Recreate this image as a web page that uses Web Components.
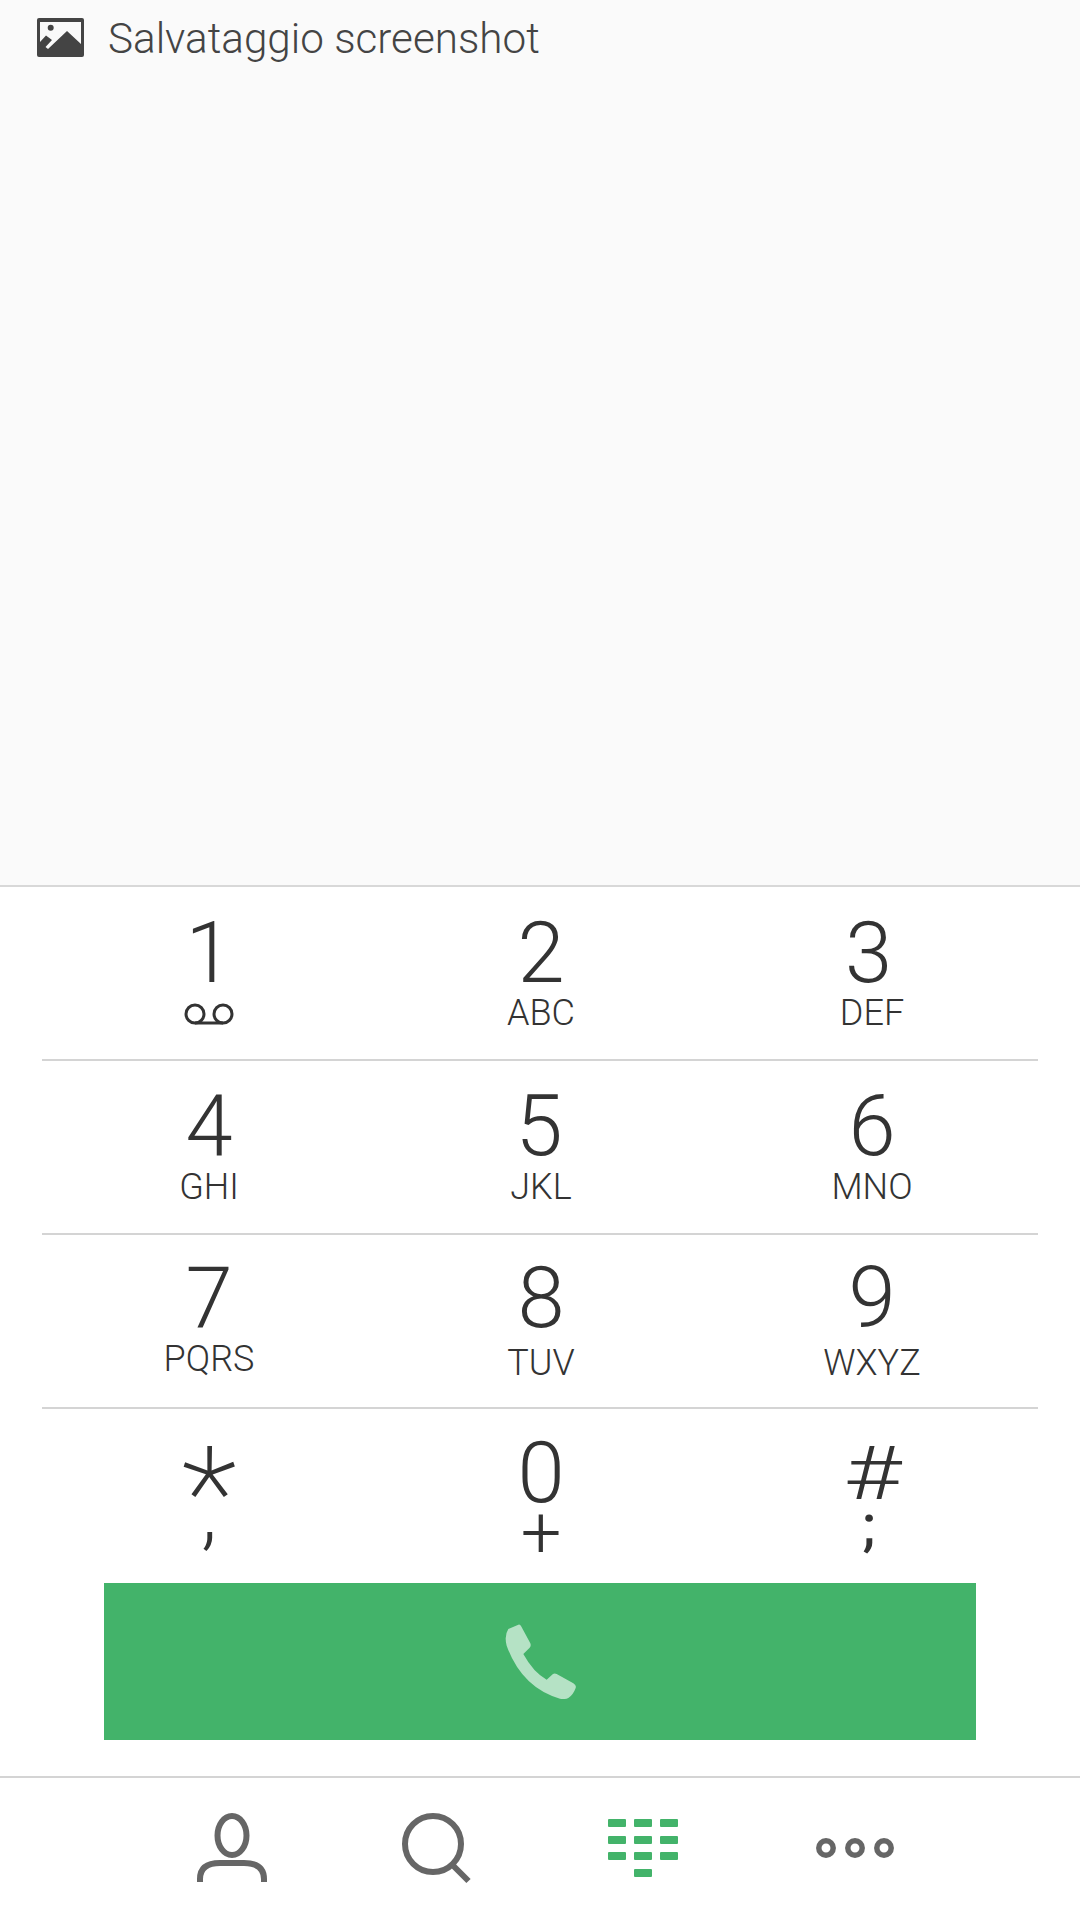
<!DOCTYPE html>
<html>
<head>
<meta charset="utf-8">
<style>
	html, body {margin:0; padding:0; background:#fff; font-family:Roboto, "Liberation Sans", sans-serif;}
	body {width:1080px; height:1920px; overflow:hidden; display:flex; flex-direction:column;}
</style>
</head>
<body>
	<notification-area>
		<svg slot="icon" width="47" height="39" viewBox="0 0 47 39">
			<rect width="47" height="39" rx="2" fill="#444"/>
			<polygon fill="#fafafa" points="3,4 44,4 44,26 30,13 11,31 8.5,29 15,22 9,17.5 3,24"/>
			<circle cx="13.7" cy="9.7" r="3" fill="#444"/>
		</svg>
		Salvataggio screenshot
	</notification-area>

	<dial-pad>
		<dial-row style="--digit-top:25px;">
			<dial-key style="--sub-gap:0px;">1
				<svg slot="sub" width="50" height="22" viewBox="0 0 50 22" style="margin-top:8px;">
					<g fill="none" stroke="#333" stroke-width="3">
						<circle cx="11" cy="11" r="9"/>
						<circle cx="39" cy="11" r="9"/>
						<line x1="11" y1="20" x2="39" y2="20"/>
					</g>
				</svg>
			</dial-key>
			<dial-key>2<span slot="sub">ABC</span></dial-key>
			<dial-key style="--digit-dx:-7px;">3<span slot="sub">DEF</span></dial-key>
		</dial-row>
		<dial-row style="--digit-top:24px;--sub-gap:2px;">
			<dial-key>4<span slot="sub">GHI</span></dial-key>
			<dial-key style="--digit-dx:-4px;">5<span slot="sub">JKL</span></dial-key>
			<dial-key>6<span slot="sub">MNO</span></dial-key>
		</dial-row>
		<dial-row style="--digit-top:22px;--sub-gap:6px;">
			<dial-key style="--sub-gap:2px;">7<span slot="sub">PQRS</span></dial-key>
			<dial-key>8<span slot="sub">TUV</span></dial-key>
			<dial-key>9<span slot="sub">WXYZ</span></dial-key>
		</dial-row>
		<dial-row style="--digit-top:23px;" last>
			<dial-key style="--digit-size:130px;--digit-shift:20px;--digit-weight:200;--sub-size:84px;--sub-gap:-41px;--sub-weight:300;">*<span slot="sub">,</span></dial-key>
			<dial-key style="--sub-size:72px;--sub-gap:0px;">0<span slot="sub">+</span></dial-key>
			<dial-key style="--digit-size:74px;--digit-scale:1.35;--sub-size:56px;--sub-gap:-7px;--sub-weight:500;--digit-dx:2px;--sub-dx:-6px;">#<span slot="sub">;</span></dial-key>
		</dial-row>
	</dial-pad>

	<call-button></call-button>

	<tab-bar>
		<tab-icon>
			<svg width="72" height="72" viewBox="0 0 72 72">
				<g fill="none" stroke="#666" stroke-width="6">
					<ellipse cx="36" cy="22.5" rx="14.5" ry="19.5"/>
					<path d="M4 69 V66 Q4 50 24 50 H48 Q68 50 68 66 V69"/>
				</g>
			</svg>
		</tab-icon>
		<tab-icon>
			<svg width="72" height="72" viewBox="0 0 72 72">
				<g fill="none" stroke="#666" stroke-width="6">
					<circle cx="33" cy="31" r="28"/>
					<line x1="52.5" y1="52" x2="68.5" y2="68"/>
				</g>
			</svg>
		</tab-icon>
		<tab-icon>
			<svg width="72" height="72" viewBox="0 0 72 72">
				<g fill="#43b36a">
					<rect x="1" y="6" width="18" height="8" rx="1"/><rect x="27" y="6" width="18" height="8" rx="1"/><rect x="53" y="6" width="18" height="8" rx="1"/>
					<rect x="1" y="23" width="18" height="8" rx="1"/><rect x="27" y="23" width="18" height="8" rx="1"/><rect x="53" y="23" width="18" height="8" rx="1"/>
					<rect x="1" y="39" width="18" height="8" rx="1"/><rect x="27" y="39" width="18" height="8" rx="1"/><rect x="53" y="39" width="18" height="8" rx="1"/>
					<rect x="27" y="56" width="18" height="8" rx="1"/>
				</g>
			</svg>
		</tab-icon>
		<tab-icon>
			<svg width="80" height="72" viewBox="0 0 80 72">
				<g fill="none" stroke="#666" stroke-width="5.5">
					<circle cx="11" cy="35" r="7.2"/>
					<circle cx="40" cy="35" r="7.2"/>
					<circle cx="69" cy="35" r="7.2"/>
				</g>
			</svg>
		</tab-icon>
	</tab-bar>

	<script>
		const make_shadow = (el, html) => {
			const shadow = el.attachShadow({mode: 'open'});
			const template = document.createElement('template');
			template.innerHTML = html;
			shadow.append(template.content);
		}

		customElements.define('notification-area', class extends HTMLElement {
			constructor() {
				super();
				make_shadow(this, `
					<style>
						:host {display:block; box-sizing:border-box; height:887px; background:#fafafa; border-bottom:2px solid #d8d8d8; color:#444;}
						.line {display:flex; align-items:center; gap:24px; padding:18px 0 0 37px; height:39px;}
						.text {font-size:42.2px; font-weight:300; line-height:39px; padding-top:2px; white-space:nowrap;}
						::slotted(svg) {flex:none;}
					</style>
					<div class="line"><slot name="icon"></slot><span class="text"><slot></slot></span></div>
				`);
			}
		});

		customElements.define('dial-pad', class extends HTMLElement {
			constructor() {
				super();
				make_shadow(this, `
					<style>
						:host {display:block; padding:0 42px; color:#333;}
					</style>
					<slot></slot>
				`);
			}
		});

		customElements.define('dial-row', class extends HTMLElement {
			constructor() {
				super();
				make_shadow(this, `
					<style>
						:host {display:grid; grid-template-columns:334px 330px 332px; box-sizing:border-box; height:174px; border-bottom:2px solid #d4d4d4;}
						:host([last]) {border-bottom:0;}
					</style>
					<slot></slot>
				`);
			}
		});

		customElements.define('dial-key', class extends HTMLElement {
			constructor() {
				super();
				make_shadow(this, `
					<style>
						:host {display:flex; flex-direction:column; align-items:center; padding-top:var(--digit-top, 25px); font-weight:300;}
						.digit {height:83px; margin-top:var(--digit-shift, 0); margin-left:var(--digit-dx, 0); font-size:var(--digit-size, 85px); font-weight:var(--digit-weight, 300); line-height:83px; transform:scaleX(var(--digit-scale, 1));}
						.sub {display:flex; justify-content:center; margin-top:var(--sub-gap, 1px); margin-left:var(--sub-dx, 0); font-size:var(--sub-size, 36px); font-weight:var(--sub-weight, 300); line-height:35px; white-space:nowrap;}
					</style>
					<div class="digit"><slot></slot></div>
					<div class="sub"><slot name="sub"></slot></div>
				`);
			}
		});

		customElements.define('call-button', class extends HTMLElement {
			constructor() {
				super();
				make_shadow(this, `
					<style>
						:host {display:flex; align-items:center; justify-content:center; height:157px; margin:0 104px 36px 104px; background:#43b36a;}
					</style>
					<svg width="71" height="75" viewBox="0 0 213 225">
						<path fill="#b5e2c5" d="M10 15 L40 2 Q45 0 48 6 L76 58 Q79 66 74 71 L55 90 Q85 145 125 167 L143 151 Q148 146 155 150 L205 178 Q215 184 212 192 Q205 212 190 222 Q180 227 165 224 Q50 190 5 65 Q-3 35 10 15 Z"/>
					</svg>
				`);
			}
		});

		customElements.define('tab-bar', class extends HTMLElement {
			constructor() {
				super();
				make_shadow(this, `
					<style>
						:host {display:grid; grid-template-columns:203.5px 207.5px 208px 80px; box-sizing:border-box; flex:1; padding:35px 0 0 196px; border-top:2px solid #d4d4d4;}
					</style>
					<slot></slot>
				`);
			}
		});

		customElements.define('tab-icon', class extends HTMLElement {
			constructor() {
				super();
				make_shadow(this, `
					<style>
						:host {display:flex; justify-content:flex-start; align-items:flex-start;}
						::slotted(svg) {display:block;}
					</style>
					<slot></slot>
				`);
			}
		});
	</script>
</body>
</html>
